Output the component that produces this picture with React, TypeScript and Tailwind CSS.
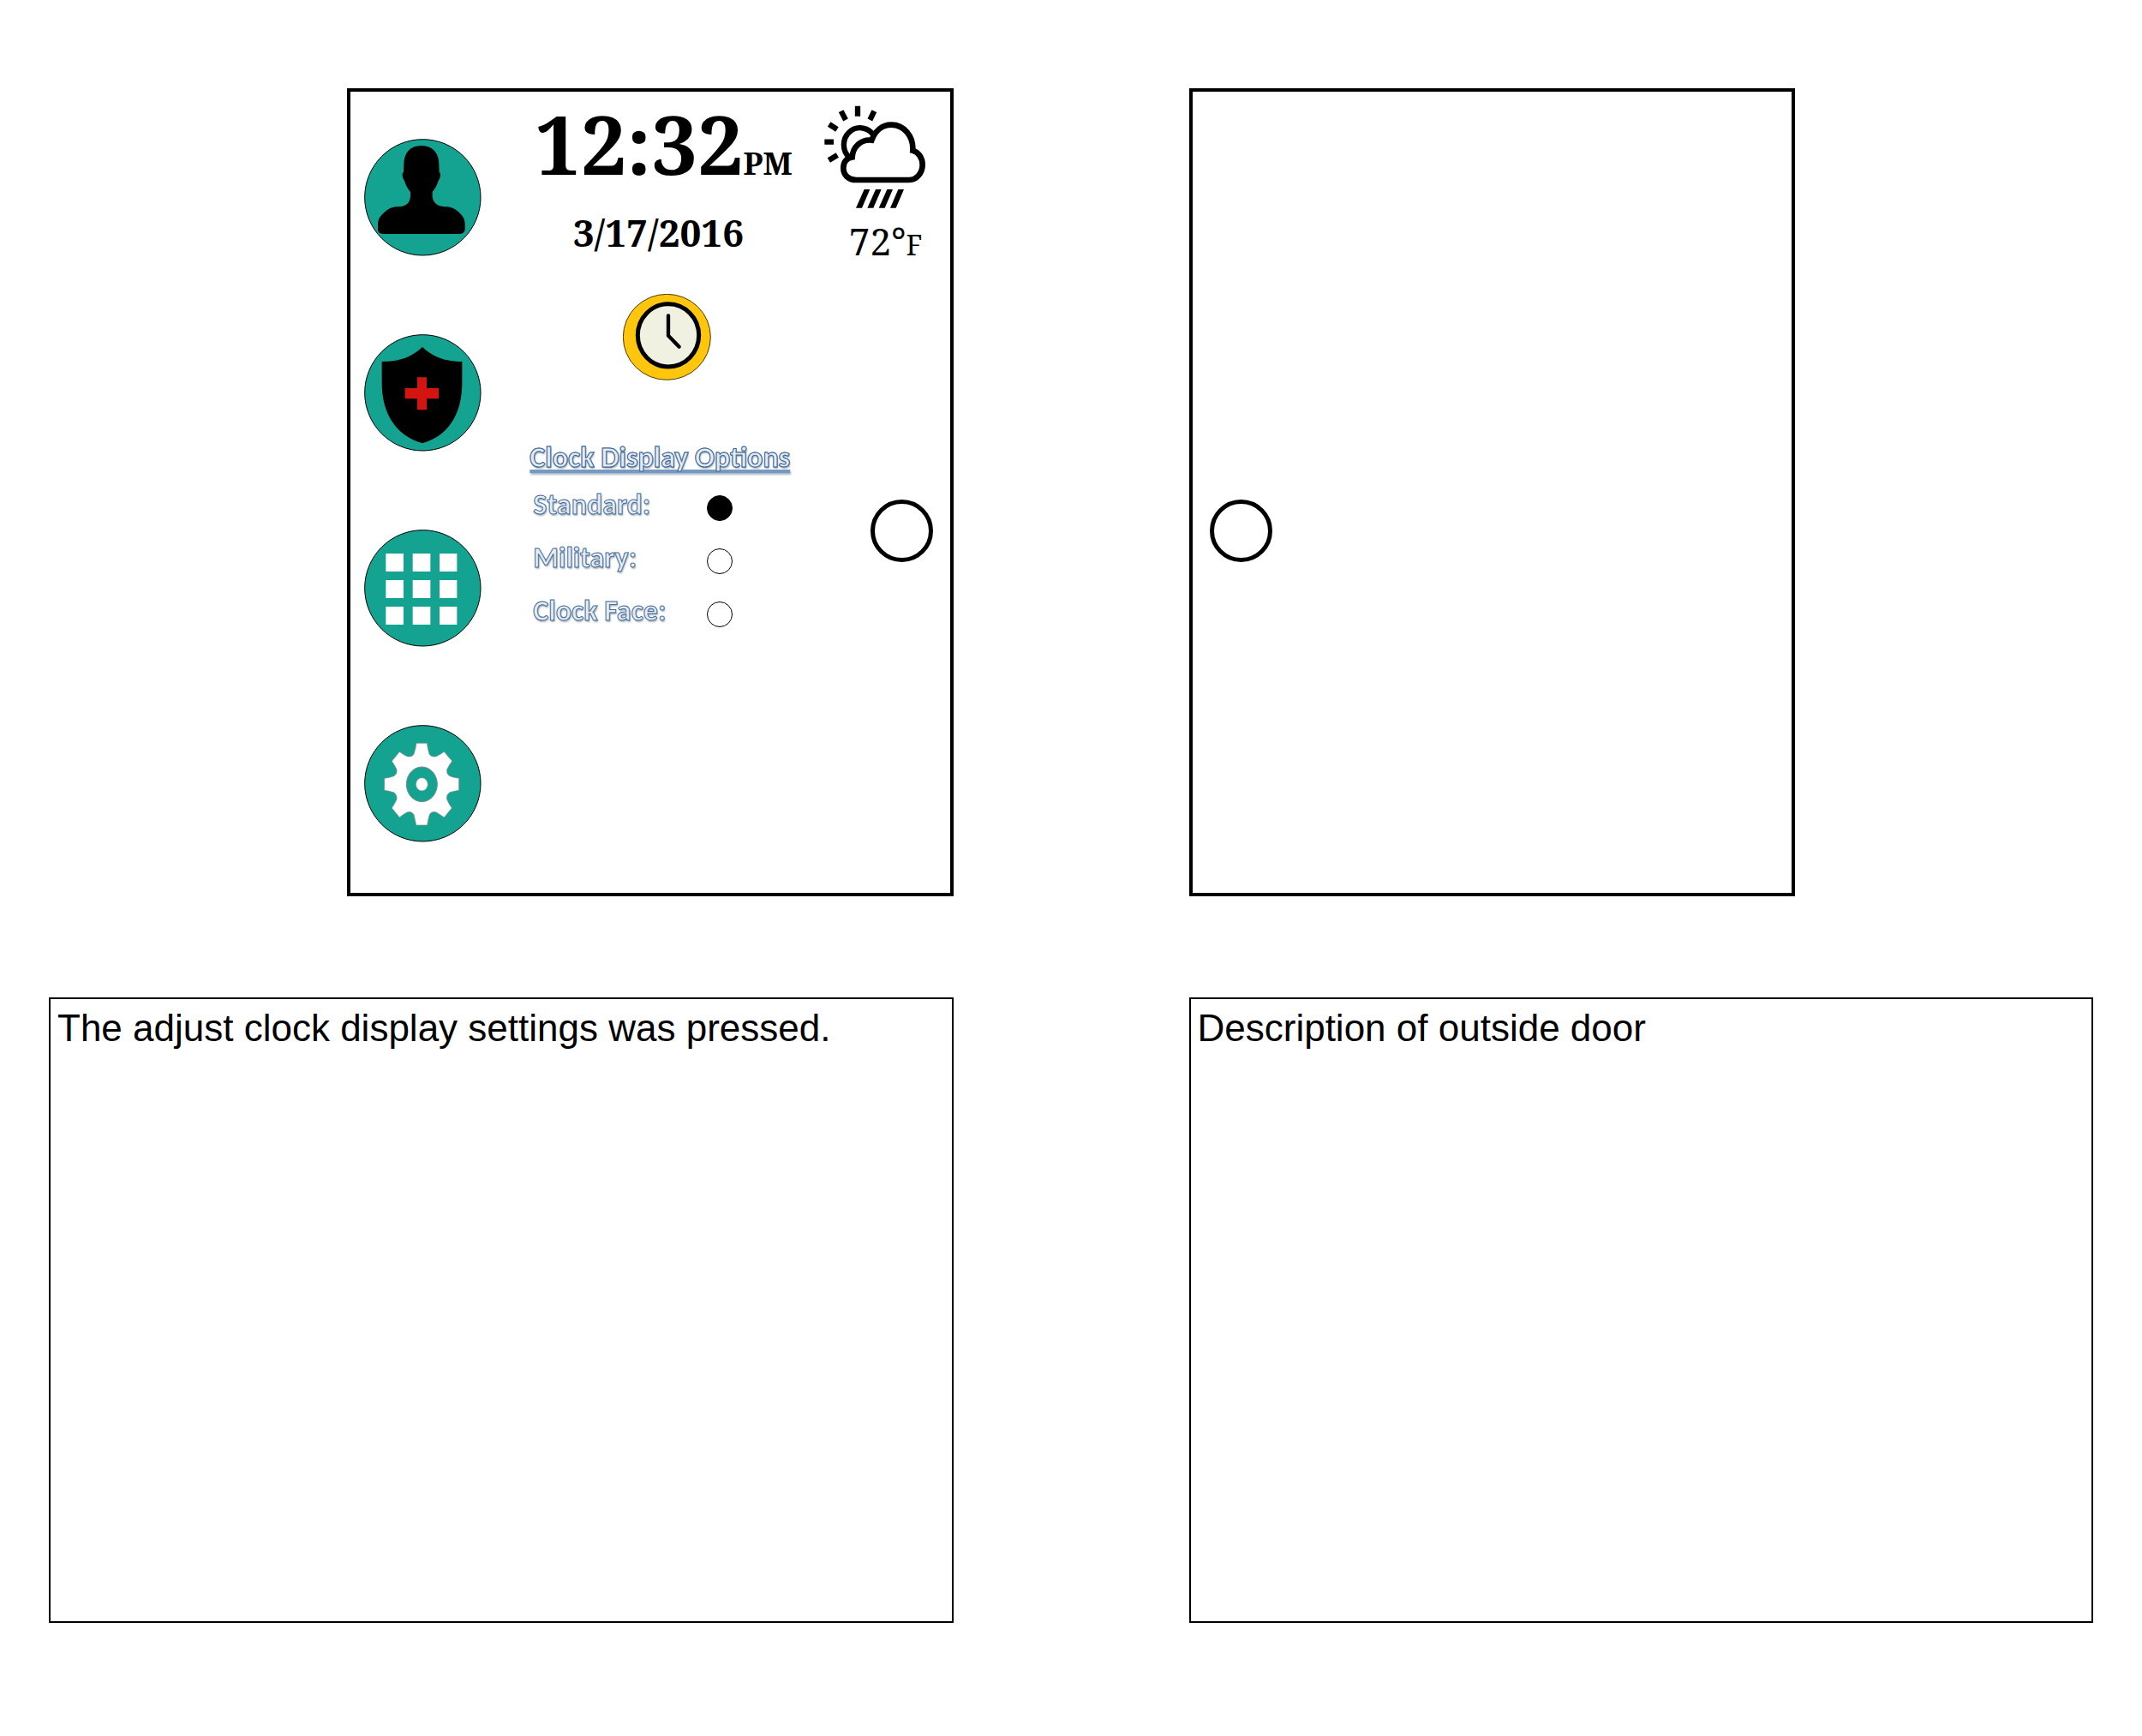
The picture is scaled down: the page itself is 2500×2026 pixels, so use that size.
import { useState, type ReactNode } from "react";

function NavButton({ label, children }: { label: string; children: ReactNode }) {
  return (
    <button type="button" aria-label={label} className="block size-[137px] cursor-pointer rounded-full">
      <svg viewBox="0 0 411 411" className="size-full" aria-hidden="true">
        <circle cx="205" cy="205" r="203" fill="#14a391" stroke="#000" strokeWidth="3" />
        {children}
      </svg>
    </button>
  );
}

function PersonIcon() {
  return (
    <path
      d="M200 24C160 24 139 50 139 90L138 116C130 123 135 140 141 146C145 162 153 175 162 186V202C160 222 150 237 120 238C95 238 85 245 70 258C52 274 48 285 48 300V316C48 326 54 333 65 333H335C346 333 353 326 353 316V300C353 285 349 272 330 256C316 243 304 238 282 238C254 236 241 222 239 202V186C248 175 256 162 260 146C266 140 271 123 263 116L262 90C262 50 240 24 200 24Z"
      fill="#000"
    />
  );
}

function ShieldIcon() {
  return (
    <>
      <path
        d="M204 45C168 78 128 96 62 96V170C62 285 118 357 204 382C291 357 343 285 343 170V96C280 96 240 78 204 45Z"
        fill="#000"
      />
      <path d="M186 151H219V189H261V226H219V265H186V226H143V189H186Z" fill="#d31411" />
    </>
  );
}

function GridIcon() {
  return (
    <path
      d="M76 84h62v63h-62zM170 84h62v63h-62zM264 84h61v63h-61zM76 177h62v63h-62zM170 177h62v63h-62zM264 177h61v63h-61zM76 270h62v63h-62zM170 270h62v63h-62zM264 270h61v63h-61z"
      fill="#fff"
    />
  );
}

function GearIcon() {
  return (
    <>
      <path
        d="M183 64H220Q223 86 228 102Q235 114 253 110Q268 103 280 94L308 127Q298 140 290 156Q288 174 302 180Q316 185 332 187V229Q316 232 300 236Q287 244 290 261Q297 278 307 291L280 324Q264 313 253 306Q236 301 229 314Q224 330 221 351H182Q178 330 174 314Q166 301 150 306Q138 312 124 324L97 291Q106 278 114 261Q116 244 103 236Q88 232 71 229V187Q88 185 102 180Q116 174 114 156Q106 140 97 127L124 94Q135 103 150 110Q168 114 174 102Q180 86 183 64Z"
        fill="#fff"
        stroke="#7b8a86"
        strokeWidth="2"
      />
      <ellipse cx="202" cy="208" rx="54" ry="61" fill="#14a391" stroke="#7b8a86" strokeWidth="3" />
      <ellipse cx="202" cy="208" rx="21" ry="23" fill="#fff" stroke="#7b8a86" strokeWidth="2" />
    </>
  );
}

function WeatherIcon() {
  return (
    <svg viewBox="96 100 357 360" className="h-[120px] w-[119px]" role="img" aria-label="Sun and rain">
      <g fill="none" stroke="#000" strokeWidth="19">
        <path d="M213 102V138M155 120L171 151M271 120L256 151M113 166L141 184M97 228H129M112 292L142 274" />
        <path d="M267 202A57 59 0 1 0 184 282" />
        <path
          d="M208 361H393C420 361 440 336 440 308C440 284 425 262 406 258C409 208 375 168 331 168C298 168 274 189 262 222C225 218 196 245 194 281C175 284 163 298 163 319C163 343 180 361 208 361Z"
          strokeWidth="20"
        />
      </g>
      <path
        d="M236 394H256L228 459H207ZM276 394H296L268 459H247ZM316 394H336L308 459H287ZM355 394H375L347 459H327Z"
        fill="#000"
      />
    </svg>
  );
}

function ClockIcon() {
  return (
    <svg viewBox="81 67 309 303" className="h-[101px] w-[103px]" aria-hidden="true">
      <ellipse cx="235" cy="218" rx="153" ry="150" fill="#ffc60d" stroke="#4a3a05" strokeWidth="3" />
      <ellipse cx="240" cy="212" rx="107" ry="110" fill="#f1f1e2" stroke="#000" strokeWidth="15" />
      <path d="M240 143V213L278 252" fill="none" stroke="#000" strokeWidth="13" strokeLinecap="round" strokeLinejoin="round" />
    </svg>
  );
}

function Handle({ label }: { label: string }) {
  return <button type="button" aria-label={label} className="size-[73px] cursor-pointer rounded-full border-5 border-black" />;
}

const displayModes = ["Standard:", "Military:", "Clock Face:"];

const artText =
  "font-['Carlito',Calibri,'Open_Sans',sans-serif] font-bold text-[#e3edf3] [-webkit-text-stroke:1px_#436a9b] [text-shadow:1px_2px_2px_#a9b3bc]";

function DisplayOptions() {
  const [mode, setMode] = useState(displayModes[0]);
  return (
    <fieldset className="mt-[70px] w-full">
      <legend
        className={`${artText} text-[34px] leading-[40px] whitespace-nowrap underline decoration-[#7399c4] decoration-4 underline-offset-3 [text-decoration-skip-ink:none]`}
      >
        Clock Display Options
      </legend>
      <div className="mt-2 pl-1">
        {displayModes.map((name) => (
          <label key={name} className="flex h-[62px] cursor-pointer items-center">
            <span className={`${artText} w-[203px] pb-2 text-[34px] leading-[40px]`}>{name}</span>
            <input
              type="radio"
              name="clock-display"
              checked={mode === name}
              onChange={() => setMode(name)}
              className="size-[30px] appearance-none rounded-full border border-black checked:bg-black"
            />
          </label>
        ))}
      </div>
    </fieldset>
  );
}

function InsideDoor() {
  return (
    <section aria-label="Inside door" className="flex aspect-[3/4] w-[67%] self-end border-4 border-black">
      <nav className="flex flex-col gap-[91px] pt-[55px] pl-4">
        <NavButton label="Profile">
          <PersonIcon />
        </NavButton>
        <NavButton label="Health">
          <ShieldIcon />
        </NavButton>
        <NavButton label="Apps">
          <GridIcon />
        </NavButton>
        <NavButton label="Settings">
          <GearIcon />
        </NavButton>
      </nav>
      <div className="flex min-w-0 flex-1 flex-col items-center pr-7 pl-14 font-['Noto_Serif','Droid_Serif','Liberation_Serif',serif] font-bold whitespace-nowrap">
        <time className="mt-1 text-[95px] leading-[112px]">
          12:32<span className="text-[36px] leading-none">PM</span>
        </time>
        <time className="mt-5 pr-3 text-[44px] leading-[56px]">3/17/2016</time>
        <div className="mt-11 pl-2">
          <button type="button" aria-label="Adjust clock display" className="block cursor-pointer rounded-full">
            <ClockIcon />
          </button>
        </div>
        <DisplayOptions />
      </div>
      <div className="flex w-[150px] flex-col items-end pr-5">
        <div className="flex h-[476px] flex-col items-end pt-4 pr-2">
          <WeatherIcon />
          <p className="mt-[10px] pr-1 font-['Noto_Serif','Droid_Serif','Liberation_Serif',serif] text-[44px] leading-[56px]">
            72°<span className="text-[32px]">F</span>
          </p>
        </div>
        <Handle label="Inside handle" />
      </div>
    </section>
  );
}

function OutsideDoor() {
  return (
    <section aria-label="Outside door" className="aspect-[3/4] w-[67%] border-4 border-black pt-[476px] pl-5">
      <Handle label="Outside handle" />
    </section>
  );
}

function Description({ children }: { children: ReactNode }) {
  return (
    <section className="mt-[118px] min-h-[730px] border-2 border-black px-2 pt-2 font-['Liberation_Sans',Arial,sans-serif] text-[44px] leading-[52px]">
      <p>{children}</p>
    </section>
  );
}

export default function App() {
  return (
    <main className="grid min-h-screen grid-cols-2 gap-[275px] bg-white px-[57px] pt-[103px] pb-[130px] text-black">
      <div className="flex flex-col">
        <InsideDoor />
        <Description>The adjust clock display settings was pressed.</Description>
      </div>
      <div className="flex flex-col">
        <OutsideDoor />
        <Description>Description of outside door</Description>
      </div>
    </main>
  );
}
